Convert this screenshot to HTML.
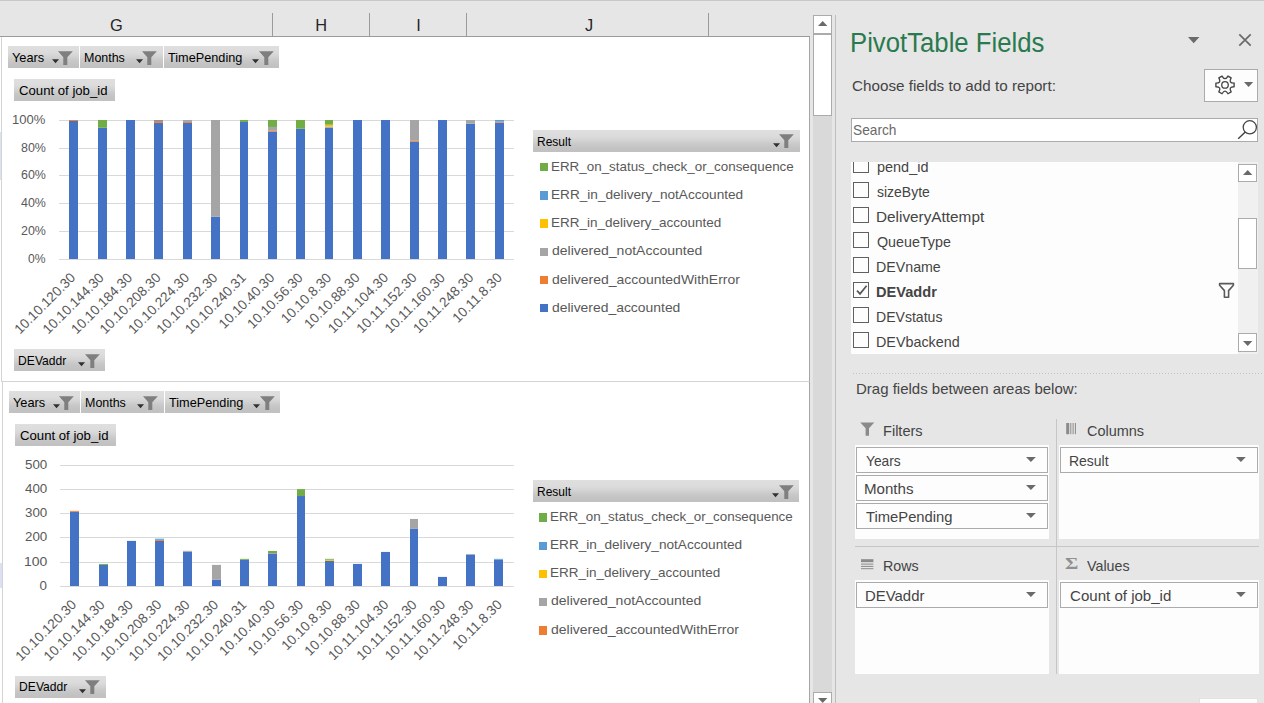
<!DOCTYPE html><html lang="en"><head><meta charset="utf-8"><title>PivotTable Fields</title><style>
html,body{margin:0;padding:0}
body{width:1264px;height:703px;overflow:hidden;position:relative;background:#e6e6e6;font-family:"Liberation Sans",sans-serif}
.a{position:absolute;box-sizing:content-box}
.t{position:absolute;white-space:pre;line-height:1;transform-origin:0 0;font-family:"Liberation Sans",sans-serif}
.pbtn{position:absolute;background:linear-gradient(#dfdfdf 0%,#dcdcdc 28%,#d4d4d4 46%,#c9c9c9 64%,#c3c3c3 82%,#c1c1c1 100%)}
.wbox{position:absolute;background:#fdfdfd;border:1px solid #ababab}
.sbtn{position:absolute;background:#fff;border:1px solid #ababab}
.item{position:absolute;background:#fdfdfd;border:1px solid #ababab}
.cb{position:absolute;width:14px;background:#fdfdfd;border:1px solid #606060}
svg{overflow:visible}
</style></head><body><div class="a" style="left:0;top:0;width:1264px;height:1px;background:#c8c8c8"></div><div class="a" style="left:0;top:37px;width:810px;height:666px;background:#fff"></div><div class="a" style="left:0;top:36px;width:810px;height:1px;background:#9b9b9b"></div><div class="a" style="left:272px;top:13px;width:1px;height:24px;background:#9b9b9b"></div><div class="a" style="left:369px;top:13px;width:1px;height:24px;background:#9b9b9b"></div><div class="a" style="left:466px;top:13px;width:1px;height:24px;background:#9b9b9b"></div><div class="a" style="left:708px;top:13px;width:1px;height:24px;background:#9b9b9b"></div><span class="t" style="left:110.00px;top:16.92px;font-size:16.4px;color:#262626;">G</span><span class="t" style="left:315.20px;top:16.92px;font-size:16.4px;color:#262626;">H</span><span class="t" style="left:416.30px;top:16.92px;font-size:16.4px;color:#262626;">I</span><span class="t" style="left:585.00px;top:16.92px;font-size:16.4px;color:#262626;">J</span><div class="a" style="left:1px;top:37px;width:807px;height:344px;border:1px solid #d4d4d4;border-top:none;border-right:1px solid #a6a6a6;background:#fff"></div><div class="a" style="left:2px;top:382px;width:806px;height:330px;border-left:1px solid #d4d4d4;border-right:1px solid #a6a6a6;background:#fff"></div><div class="a" style="left:0;top:132px;width:1px;height:48px;background:#d9e1f2"></div><div class="a" style="left:0;top:563px;width:2px;height:25px;background:#d9e1f2"></div><div class="pbtn" style="left:8.0px;top:46.2px;width:70.8px;height:21.6px"></div><span class="t" style="left:12.00px;top:51.56px;font-size:12.1px;color:#000;transform:scaleX(1.0580);">Years</span><svg class="a" style="left:51.8px;top:59.0px" width="8" height="5" viewBox="0 0 8 5"><path d="M0 0.2 H7 L3.5 4.2 Z" fill="#303030"/></svg><svg class="a" style="left:58.3px;top:50.5px" width="16" height="15" viewBox="0 0 16 15"><path d="M0 0.2 H14.8 L9.3 6.3 V14.0 H5.3 V6.3 Z" fill="#7f7f7f"/></svg><div class="pbtn" style="left:80.1px;top:46.2px;width:82.7px;height:21.6px"></div><span class="t" style="left:84.30px;top:51.56px;font-size:12.1px;color:#000;transform:scaleX(1.0300);">Months</span><svg class="a" style="left:135.8px;top:59.0px" width="8" height="5" viewBox="0 0 8 5"><path d="M0 0.2 H7 L3.5 4.2 Z" fill="#303030"/></svg><svg class="a" style="left:142.3px;top:50.5px" width="16" height="15" viewBox="0 0 16 15"><path d="M0 0.2 H14.8 L9.3 6.3 V14.0 H5.3 V6.3 Z" fill="#7f7f7f"/></svg><div class="pbtn" style="left:164.0px;top:46.2px;width:115.0px;height:21.6px"></div><span class="t" style="left:168.00px;top:51.56px;font-size:12.1px;color:#000;transform:scaleX(1.0502);">TimePending</span><svg class="a" style="left:252.0px;top:59.0px" width="8" height="5" viewBox="0 0 8 5"><path d="M0 0.2 H7 L3.5 4.2 Z" fill="#303030"/></svg><svg class="a" style="left:258.5px;top:50.5px" width="16" height="15" viewBox="0 0 16 15"><path d="M0 0.2 H14.8 L9.3 6.3 V14.0 H5.3 V6.3 Z" fill="#7f7f7f"/></svg><div class="pbtn" style="left:14.0px;top:79.1px;width:100.9px;height:21.6px"></div><span class="t" style="left:18.50px;top:85.26px;font-size:12.1px;color:#000;transform:scaleX(1.0877);">Count of job_id</span><div class="pbtn" style="left:14.0px;top:349.3px;width:91.0px;height:21.6px"></div><span class="t" style="left:18.10px;top:354.66px;font-size:12.1px;color:#000;">DEVaddr</span><svg class="a" style="left:78.0px;top:362.1px" width="8" height="5" viewBox="0 0 8 5"><path d="M0 0.2 H7 L3.5 4.2 Z" fill="#303030"/></svg><svg class="a" style="left:84.5px;top:353.6px" width="16" height="15" viewBox="0 0 16 15"><path d="M0 0.2 H14.8 L9.3 6.3 V14.0 H5.3 V6.3 Z" fill="#7f7f7f"/></svg><div class="pbtn" style="left:533.0px;top:130.0px;width:266.7px;height:21.6px"></div><span class="t" style="left:537.10px;top:135.86px;font-size:12.1px;color:#000;transform:scaleX(0.9909);">Result</span><svg class="a" style="left:772.7px;top:142.8px" width="8" height="5" viewBox="0 0 8 5"><path d="M0 0.2 H7 L3.5 4.2 Z" fill="#303030"/></svg><svg class="a" style="left:779.2px;top:134.3px" width="16" height="15" viewBox="0 0 16 15"><path d="M0 0.2 H14.8 L9.3 6.3 V14.0 H5.3 V6.3 Z" fill="#7f7f7f"/></svg><svg class="a" style="left:0;top:0" width="812" height="703" viewBox="0 0 812 703" font-family='"Liberation Sans", sans-serif'><rect x="59.0" y="259" width="455.0" height="1" fill="#d9d9d9"/><rect x="59.0" y="231" width="455.0" height="1" fill="#d9d9d9"/><rect x="59.0" y="203" width="455.0" height="1" fill="#d9d9d9"/><rect x="59.0" y="175" width="455.0" height="1" fill="#d9d9d9"/><rect x="59.0" y="148" width="455.0" height="1" fill="#d9d9d9"/><rect x="59.0" y="120" width="455.0" height="1" fill="#d9d9d9"/><rect x="69" y="120.97" width="9" height="138.03" fill="#4472c4"/><rect x="69" y="120.00" width="9" height="0.97" fill="#ed7d31"/><rect x="98" y="127.78" width="9" height="131.22" fill="#4472c4"/><rect x="98" y="120.00" width="9" height="7.78" fill="#70ad47"/><rect x="126" y="120.00" width="9" height="139.00" fill="#4472c4"/><rect x="154" y="122.92" width="9" height="136.08" fill="#4472c4"/><rect x="154" y="120.97" width="9" height="1.95" fill="#ed7d31"/><rect x="154" y="120.00" width="9" height="0.97" fill="#5b9bd5"/><rect x="183" y="122.92" width="9" height="136.08" fill="#4472c4"/><rect x="183" y="121.95" width="9" height="0.97" fill="#ed7d31"/><rect x="183" y="120.00" width="9" height="1.95" fill="#a5a5a5"/><rect x="211" y="216.61" width="9" height="42.39" fill="#4472c4"/><rect x="211" y="120.00" width="9" height="96.61" fill="#a5a5a5"/><rect x="240" y="121.95" width="8" height="137.05" fill="#4472c4"/><rect x="240" y="120.00" width="8" height="1.95" fill="#70ad47"/><rect x="268" y="131.81" width="9" height="127.19" fill="#4472c4"/><rect x="268" y="130.84" width="9" height="0.97" fill="#ed7d31"/><rect x="268" y="126.95" width="9" height="3.89" fill="#a5a5a5"/><rect x="268" y="120.00" width="9" height="6.95" fill="#70ad47"/><rect x="296" y="128.76" width="9" height="130.24" fill="#4472c4"/><rect x="296" y="120.00" width="9" height="8.76" fill="#70ad47"/><rect x="325" y="127.65" width="8" height="131.35" fill="#4472c4"/><rect x="325" y="126.67" width="8" height="0.97" fill="#a5a5a5"/><rect x="325" y="124.73" width="8" height="1.95" fill="#ffc000"/><rect x="325" y="120.00" width="8" height="4.73" fill="#70ad47"/><rect x="353" y="120.00" width="9" height="139.00" fill="#4472c4"/><rect x="381" y="120.00" width="9" height="139.00" fill="#4472c4"/><rect x="410" y="141.82" width="9" height="117.18" fill="#4472c4"/><rect x="410" y="140.85" width="9" height="0.97" fill="#ed7d31"/><rect x="410" y="120.00" width="9" height="20.85" fill="#a5a5a5"/><rect x="438" y="120.00" width="9" height="139.00" fill="#4472c4"/><rect x="466" y="123.75" width="9" height="135.25" fill="#4472c4"/><rect x="466" y="120.00" width="9" height="3.75" fill="#a5a5a5"/><rect x="495" y="122.64" width="9" height="136.36" fill="#4472c4"/><rect x="495" y="121.67" width="9" height="0.97" fill="#ed7d31"/><rect x="495" y="120.00" width="9" height="1.67" fill="#5b9bd5"/><text x="76.2" y="278.5" text-anchor="end" transform="rotate(-45 76.2 278.5)" font-size="13.65" fill="#595959">10.10.120.30</text><text x="104.7" y="278.5" text-anchor="end" transform="rotate(-45 104.7 278.5)" font-size="13.65" fill="#595959">10.10.144.30</text><text x="133.1" y="278.5" text-anchor="end" transform="rotate(-45 133.1 278.5)" font-size="13.65" fill="#595959">10.10.184.30</text><text x="161.5" y="278.5" text-anchor="end" transform="rotate(-45 161.5 278.5)" font-size="13.65" fill="#595959">10.10.208.30</text><text x="190.0" y="278.5" text-anchor="end" transform="rotate(-45 190.0 278.5)" font-size="13.65" fill="#595959">10.10.224.30</text><text x="218.4" y="278.5" text-anchor="end" transform="rotate(-45 218.4 278.5)" font-size="13.65" fill="#595959">10.10.232.30</text><text x="246.8" y="278.5" text-anchor="end" transform="rotate(-45 246.8 278.5)" font-size="13.65" fill="#595959">10.10.240.31</text><text x="275.3" y="278.5" text-anchor="end" transform="rotate(-45 275.3 278.5)" font-size="13.65" fill="#595959">10.10.40.30</text><text x="303.7" y="278.5" text-anchor="end" transform="rotate(-45 303.7 278.5)" font-size="13.65" fill="#595959">10.10.56.30</text><text x="332.2" y="278.5" text-anchor="end" transform="rotate(-45 332.2 278.5)" font-size="13.65" fill="#595959">10.10.8.30</text><text x="360.6" y="278.5" text-anchor="end" transform="rotate(-45 360.6 278.5)" font-size="13.65" fill="#595959">10.10.88.30</text><text x="389.0" y="278.5" text-anchor="end" transform="rotate(-45 389.0 278.5)" font-size="13.65" fill="#595959">10.11.104.30</text><text x="417.5" y="278.5" text-anchor="end" transform="rotate(-45 417.5 278.5)" font-size="13.65" fill="#595959">10.11.152.30</text><text x="445.9" y="278.5" text-anchor="end" transform="rotate(-45 445.9 278.5)" font-size="13.65" fill="#595959">10.11.160.30</text><text x="474.3" y="278.5" text-anchor="end" transform="rotate(-45 474.3 278.5)" font-size="13.65" fill="#595959">10.11.248.30</text><text x="502.8" y="278.5" text-anchor="end" transform="rotate(-45 502.8 278.5)" font-size="13.65" fill="#595959">10.11.8.30</text></svg><span class="t" style="left:27.90px;top:251.76px;font-size:13.4px;color:#595959;transform:scaleX(0.9050);">0%</span><span class="t" style="left:20.50px;top:223.76px;font-size:13.4px;color:#595959;transform:scaleX(0.9296);">20%</span><span class="t" style="left:20.50px;top:195.76px;font-size:13.4px;color:#595959;transform:scaleX(0.9296);">40%</span><span class="t" style="left:20.50px;top:167.76px;font-size:13.4px;color:#595959;transform:scaleX(0.9296);">60%</span><span class="t" style="left:20.50px;top:140.76px;font-size:13.4px;color:#595959;transform:scaleX(0.9296);">80%</span><span class="t" style="left:12.13px;top:112.76px;font-size:13.4px;color:#595959;transform:scaleX(0.9718);">100%</span><div class="a" style="left:540.3px;top:163.0px;width:8px;height:8.4px;background:#70ad47"></div><span class="t" style="left:550.58px;top:159.73px;font-size:13.2px;color:#595959;transform:scaleX(1.0157);">ERR_on_status_check_or_consequence</span><div class="a" style="left:540.3px;top:191.2px;width:8px;height:8.4px;background:#5b9bd5"></div><span class="t" style="left:550.57px;top:187.95px;font-size:13.2px;color:#595959;transform:scaleX(1.0321);">ERR_in_delivery_notAccounted</span><div class="a" style="left:540.3px;top:219.4px;width:8px;height:8.4px;background:#ffc000"></div><span class="t" style="left:550.58px;top:216.17px;font-size:13.2px;color:#595959;transform:scaleX(1.0238);">ERR_in_delivery_accounted</span><div class="a" style="left:540.3px;top:247.7px;width:8px;height:8.4px;background:#a5a5a5"></div><span class="t" style="left:551.60px;top:244.39px;font-size:13.2px;color:#595959;transform:scaleX(1.0619);">delivered_notAccounted</span><div class="a" style="left:540.3px;top:275.9px;width:8px;height:8.4px;background:#ed7d31"></div><span class="t" style="left:551.60px;top:272.61px;font-size:13.2px;color:#595959;transform:scaleX(1.0590);">delivered_accountedWithError</span><div class="a" style="left:540.3px;top:304.1px;width:8px;height:8.4px;background:#4472c4"></div><span class="t" style="left:551.60px;top:300.83px;font-size:13.2px;color:#595959;transform:scaleX(1.0546);">delivered_accounted</span><div class="pbtn" style="left:9.0px;top:391.2px;width:70.8px;height:21.6px"></div><span class="t" style="left:13.00px;top:396.56px;font-size:12.1px;color:#000;transform:scaleX(1.0580);">Years</span><svg class="a" style="left:52.8px;top:404.0px" width="8" height="5" viewBox="0 0 8 5"><path d="M0 0.2 H7 L3.5 4.2 Z" fill="#303030"/></svg><svg class="a" style="left:59.3px;top:395.5px" width="16" height="15" viewBox="0 0 16 15"><path d="M0 0.2 H14.8 L9.3 6.3 V14.0 H5.3 V6.3 Z" fill="#7f7f7f"/></svg><div class="pbtn" style="left:81.1px;top:391.2px;width:82.7px;height:21.6px"></div><span class="t" style="left:85.30px;top:396.56px;font-size:12.1px;color:#000;transform:scaleX(1.0300);">Months</span><svg class="a" style="left:136.8px;top:404.0px" width="8" height="5" viewBox="0 0 8 5"><path d="M0 0.2 H7 L3.5 4.2 Z" fill="#303030"/></svg><svg class="a" style="left:143.3px;top:395.5px" width="16" height="15" viewBox="0 0 16 15"><path d="M0 0.2 H14.8 L9.3 6.3 V14.0 H5.3 V6.3 Z" fill="#7f7f7f"/></svg><div class="pbtn" style="left:165.0px;top:391.2px;width:115.0px;height:21.6px"></div><span class="t" style="left:169.00px;top:396.56px;font-size:12.1px;color:#000;transform:scaleX(1.0502);">TimePending</span><svg class="a" style="left:253.0px;top:404.0px" width="8" height="5" viewBox="0 0 8 5"><path d="M0 0.2 H7 L3.5 4.2 Z" fill="#303030"/></svg><svg class="a" style="left:259.5px;top:395.5px" width="16" height="15" viewBox="0 0 16 15"><path d="M0 0.2 H14.8 L9.3 6.3 V14.0 H5.3 V6.3 Z" fill="#7f7f7f"/></svg><div class="pbtn" style="left:15.0px;top:424.1px;width:100.9px;height:21.6px"></div><span class="t" style="left:19.50px;top:430.26px;font-size:12.1px;color:#000;transform:scaleX(1.0877);">Count of job_id</span><div class="pbtn" style="left:15.0px;top:676.1px;width:90.9px;height:21.6px"></div><span class="t" style="left:19.10px;top:681.46px;font-size:12.1px;color:#000;">DEVaddr</span><svg class="a" style="left:78.9px;top:688.9px" width="8" height="5" viewBox="0 0 8 5"><path d="M0 0.2 H7 L3.5 4.2 Z" fill="#303030"/></svg><svg class="a" style="left:85.4px;top:680.4px" width="16" height="15" viewBox="0 0 16 15"><path d="M0 0.2 H14.8 L9.3 6.3 V14.0 H5.3 V6.3 Z" fill="#7f7f7f"/></svg><div class="pbtn" style="left:533.0px;top:480.3px;width:266.0px;height:21.6px"></div><span class="t" style="left:537.10px;top:486.16px;font-size:12.1px;color:#000;transform:scaleX(0.9909);">Result</span><svg class="a" style="left:772.0px;top:493.1px" width="8" height="5" viewBox="0 0 8 5"><path d="M0 0.2 H7 L3.5 4.2 Z" fill="#303030"/></svg><svg class="a" style="left:778.5px;top:484.6px" width="16" height="15" viewBox="0 0 16 15"><path d="M0 0.2 H14.8 L9.3 6.3 V14.0 H5.3 V6.3 Z" fill="#7f7f7f"/></svg><svg class="a" style="left:0;top:0" width="812" height="703" viewBox="0 0 812 703" font-family='"Liberation Sans", sans-serif'><rect x="60.0" y="586" width="454.0" height="1" fill="#d9d9d9"/><rect x="60.0" y="562" width="454.0" height="1" fill="#d9d9d9"/><rect x="60.0" y="537" width="454.0" height="1" fill="#d9d9d9"/><rect x="60.0" y="513" width="454.0" height="1" fill="#d9d9d9"/><rect x="60.0" y="489" width="454.0" height="1" fill="#d9d9d9"/><rect x="60.0" y="465" width="454.0" height="1" fill="#d9d9d9"/><rect x="70" y="511.80" width="9" height="74.20" fill="#4472c4"/><rect x="70" y="510.82" width="9" height="0.97" fill="#ed7d31"/><rect x="99" y="564.90" width="9" height="21.10" fill="#4472c4"/><rect x="99" y="563.93" width="9" height="0.97" fill="#70ad47"/><rect x="127" y="540.89" width="9" height="45.11" fill="#4472c4"/><rect x="155" y="540.89" width="9" height="45.11" fill="#4472c4"/><rect x="155" y="539.80" width="9" height="1.09" fill="#ed7d31"/><rect x="155" y="538.71" width="9" height="1.09" fill="#5b9bd5"/><rect x="183" y="551.81" width="9" height="34.19" fill="#4472c4"/><rect x="183" y="550.84" width="9" height="0.97" fill="#a5a5a5"/><rect x="212" y="579.82" width="9" height="6.18" fill="#4472c4"/><rect x="212" y="564.90" width="9" height="14.91" fill="#a5a5a5"/><rect x="240" y="559.81" width="9" height="26.19" fill="#4472c4"/><rect x="240" y="558.84" width="9" height="0.97" fill="#70ad47"/><rect x="268" y="553.99" width="9" height="32.01" fill="#4472c4"/><rect x="268" y="553.02" width="9" height="0.97" fill="#a5a5a5"/><rect x="268" y="550.96" width="9" height="2.06" fill="#70ad47"/><rect x="297" y="496.03" width="8" height="89.97" fill="#4472c4"/><rect x="297" y="489.12" width="8" height="6.91" fill="#70ad47"/><rect x="325" y="560.90" width="9" height="25.10" fill="#4472c4"/><rect x="325" y="559.69" width="9" height="1.21" fill="#ffc000"/><rect x="325" y="558.84" width="9" height="0.85" fill="#70ad47"/><rect x="353" y="563.93" width="9" height="22.07" fill="#4472c4"/><rect x="381" y="551.93" width="9" height="34.07" fill="#4472c4"/><rect x="410" y="528.89" width="8" height="57.11" fill="#4472c4"/><rect x="410" y="518.95" width="8" height="9.94" fill="#a5a5a5"/><rect x="438" y="576.91" width="9" height="9.09" fill="#4472c4"/><rect x="466" y="554.72" width="9" height="31.28" fill="#4472c4"/><rect x="466" y="553.99" width="9" height="0.73" fill="#a5a5a5"/><rect x="494" y="559.57" width="9" height="26.43" fill="#4472c4"/><rect x="494" y="558.84" width="9" height="0.73" fill="#5b9bd5"/><text x="77.2" y="605.5" text-anchor="end" transform="rotate(-45 77.2 605.5)" font-size="13.65" fill="#595959">10.10.120.30</text><text x="105.6" y="605.5" text-anchor="end" transform="rotate(-45 105.6 605.5)" font-size="13.65" fill="#595959">10.10.144.30</text><text x="133.9" y="605.5" text-anchor="end" transform="rotate(-45 133.9 605.5)" font-size="13.65" fill="#595959">10.10.184.30</text><text x="162.3" y="605.5" text-anchor="end" transform="rotate(-45 162.3 605.5)" font-size="13.65" fill="#595959">10.10.208.30</text><text x="190.7" y="605.5" text-anchor="end" transform="rotate(-45 190.7 605.5)" font-size="13.65" fill="#595959">10.10.224.30</text><text x="219.1" y="605.5" text-anchor="end" transform="rotate(-45 219.1 605.5)" font-size="13.65" fill="#595959">10.10.232.30</text><text x="247.4" y="605.5" text-anchor="end" transform="rotate(-45 247.4 605.5)" font-size="13.65" fill="#595959">10.10.240.31</text><text x="275.8" y="605.5" text-anchor="end" transform="rotate(-45 275.8 605.5)" font-size="13.65" fill="#595959">10.10.40.30</text><text x="304.2" y="605.5" text-anchor="end" transform="rotate(-45 304.2 605.5)" font-size="13.65" fill="#595959">10.10.56.30</text><text x="332.6" y="605.5" text-anchor="end" transform="rotate(-45 332.6 605.5)" font-size="13.65" fill="#595959">10.10.8.30</text><text x="360.9" y="605.5" text-anchor="end" transform="rotate(-45 360.9 605.5)" font-size="13.65" fill="#595959">10.10.88.30</text><text x="389.3" y="605.5" text-anchor="end" transform="rotate(-45 389.3 605.5)" font-size="13.65" fill="#595959">10.11.104.30</text><text x="417.7" y="605.5" text-anchor="end" transform="rotate(-45 417.7 605.5)" font-size="13.65" fill="#595959">10.11.152.30</text><text x="446.1" y="605.5" text-anchor="end" transform="rotate(-45 446.1 605.5)" font-size="13.65" fill="#595959">10.11.160.30</text><text x="474.4" y="605.5" text-anchor="end" transform="rotate(-45 474.4 605.5)" font-size="13.65" fill="#595959">10.11.248.30</text><text x="502.8" y="605.5" text-anchor="end" transform="rotate(-45 502.8 605.5)" font-size="13.65" fill="#595959">10.11.8.30</text></svg><span class="t" style="left:39.50px;top:578.76px;font-size:13.4px;color:#595959;">0</span><span class="t" style="left:23.66px;top:554.76px;font-size:13.4px;color:#595959;transform:scaleX(1.0433);">100</span><span class="t" style="left:24.70px;top:529.76px;font-size:13.4px;color:#595959;transform:scaleX(0.9957);">200</span><span class="t" style="left:24.70px;top:505.76px;font-size:13.4px;color:#595959;transform:scaleX(0.9957);">300</span><span class="t" style="left:24.70px;top:481.76px;font-size:13.4px;color:#595959;transform:scaleX(0.9957);">400</span><span class="t" style="left:24.70px;top:457.76px;font-size:13.4px;color:#595959;transform:scaleX(0.9957);">500</span><div class="a" style="left:539.2px;top:513.3px;width:8px;height:8.4px;background:#70ad47"></div><span class="t" style="left:550.08px;top:509.73px;font-size:13.2px;color:#595959;transform:scaleX(1.0157);">ERR_on_status_check_or_consequence</span><div class="a" style="left:539.2px;top:541.5px;width:8px;height:8.4px;background:#5b9bd5"></div><span class="t" style="left:550.07px;top:537.95px;font-size:13.2px;color:#595959;transform:scaleX(1.0321);">ERR_in_delivery_notAccounted</span><div class="a" style="left:539.2px;top:569.7px;width:8px;height:8.4px;background:#ffc000"></div><span class="t" style="left:550.08px;top:566.17px;font-size:13.2px;color:#595959;transform:scaleX(1.0238);">ERR_in_delivery_accounted</span><div class="a" style="left:539.2px;top:598.0px;width:8px;height:8.4px;background:#a5a5a5"></div><span class="t" style="left:551.10px;top:594.39px;font-size:13.2px;color:#595959;transform:scaleX(1.0619);">delivered_notAccounted</span><div class="a" style="left:539.2px;top:626.2px;width:8px;height:8.4px;background:#ed7d31"></div><span class="t" style="left:551.10px;top:622.61px;font-size:13.2px;color:#595959;transform:scaleX(1.0590);">delivered_accountedWithError</span><div class="a" style="left:813px;top:15px;width:19px;height:688px;background:#d9d9d9"></div><div class="sbtn" style="left:813px;top:15px;width:17px;height:17px"></div><svg class="a" style="left:817.8px;top:20.9px" width="9.4" height="5" viewBox="0 0 9.4 5"><path d="M0 5 H9.4 L4.7 0 Z" fill="#6a6a6a"/></svg><div class="sbtn" style="left:813px;top:34px;width:17px;height:80px"></div><div class="sbtn" style="left:813px;top:692.4px;width:17px;height:17px"></div><svg class="a" style="left:817.8px;top:698.2px" width="10" height="5" viewBox="0 0 10 5"><path d="M0 0 H9.4 L4.7 5 Z" fill="#6a6a6a"/></svg><div class="a" style="left:835px;top:15px;width:1px;height:688px;background:#bdbdbd"></div><span class="t" style="left:849.60px;top:29.54px;font-size:27px;color:#297a4e;transform:scaleX(0.9524);">PivotTable Fields</span><svg class="a" style="left:1188.0px;top:37.0px" width="11.4" height="6.2" viewBox="0 0 11.4 6.2"><path d="M0 0 H11.4 L5.7 6.2 Z" fill="#6a6a6a"/></svg><svg class="a" style="left:1238px;top:32.6px" width="14" height="14" viewBox="0 0 14 14"><path d="M1.3 1.3 L12.7 12.7 M12.7 1.3 L1.3 12.7" stroke="#6a6a6a" stroke-width="1.7" fill="none"/></svg><span class="t" style="left:852.30px;top:78.40px;font-size:15px;color:#444444;transform:scaleX(1.0146);">Choose fields to add to report:</span><div class="wbox" style="left:1204px;top:69px;width:52px;height:31px"></div><svg class="a" style="left:0;top:0" width="1264" height="120" viewBox="0 0 1264 120"><path d="M1234.11 83.05 L1234.11 86.75 Q1228.12 86.70 1231.16 91.87 L1227.95 93.72 Q1225.00 88.50 1222.05 93.72 L1218.84 91.87 Q1221.88 86.70 1215.89 86.75 L1215.89 83.05 Q1221.88 83.10 1218.84 77.93 L1222.05 76.08 Q1225.00 81.30 1227.95 76.08 L1231.16 77.93 Q1228.12 83.10 1234.11 83.05 Z" fill="none" stroke="#444" stroke-width="1.35" stroke-linejoin="round"/><circle cx="1225.0" cy="84.9" r="3.25" fill="none" stroke="#444" stroke-width="1.3"/></svg><svg class="a" style="left:1244.0px;top:82.1px" width="9.2" height="4.9" viewBox="0 0 9.2 4.9"><path d="M0 0 H9.2 L4.6 4.9 Z" fill="#6a6a6a"/></svg><div class="wbox" style="left:851px;top:118px;width:405px;height:22px;background:#fff"></div><span class="t" style="left:853.10px;top:122.20px;font-size:15px;color:#6a6a6a;transform:scaleX(0.9134);">Search</span><svg class="a" style="left:1236px;top:118px" width="24" height="24" viewBox="0 0 24 24"><circle cx="13.8" cy="9.3" r="6.6" fill="none" stroke="#444" stroke-width="1.3"/><path d="M9.3 14 L2.2 20.8" stroke="#444" stroke-width="1.5" fill="none"/></svg><div class="a" style="left:851px;top:162px;width:387px;height:192.3px;background:#fdfdfd;overflow:hidden"></div><div class="a" style="left:1238px;top:162px;width:20px;height:192.3px;background:#f0f0f0"></div><div class="cb" style="left:853px;top:162px;height:10px;border-top:none;"></div><span class="t" style="left:877.00px;top:159.00px;font-size:15px;color:#444444;transform:scaleX(0.9634);clip-path:inset(3.0px -3px -6px -3px);">pend_id</span><div class="cb" style="left:853px;top:182px;height:14px;"></div><span class="t" style="left:877.00px;top:184.00px;font-size:15px;color:#444444;transform:scaleX(0.9317);">sizeByte</span><div class="cb" style="left:853px;top:207px;height:14px;"></div><span class="t" style="left:875.98px;top:209.00px;font-size:15px;color:#444444;transform:scaleX(1.0218);">DeliveryAttempt</span><div class="cb" style="left:853px;top:232px;height:14px;"></div><span class="t" style="left:877.00px;top:234.00px;font-size:15px;color:#444444;transform:scaleX(0.9532);">QueueType</span><div class="cb" style="left:853px;top:257px;height:14px;"></div><span class="t" style="left:876.05px;top:259.00px;font-size:15px;color:#444444;transform:scaleX(0.9475);">DEVname</span><div class="cb" style="left:853px;top:282px;height:14px;"></div><span class="t" style="left:876.03px;top:284.00px;font-size:15px;color:#444444;transform:scaleX(0.9727);font-weight:bold;">DEVaddr</span><svg class="a" style="left:855px;top:284px" width="13" height="12" viewBox="0 0 13 12"><path d="M2.0 6.7 L5.0 9.9 L11.6 1.8" stroke="#585858" stroke-width="1.7" fill="none"/></svg><div class="cb" style="left:853px;top:307px;height:14px;"></div><span class="t" style="left:876.06px;top:309.00px;font-size:15px;color:#444444;transform:scaleX(0.9371);">DEVstatus</span><div class="cb" style="left:853px;top:332px;height:14px;"></div><span class="t" style="left:876.04px;top:334.00px;font-size:15px;color:#444444;transform:scaleX(0.9558);">DEVbackend</span><svg class="a" style="left:1217.6px;top:282.4px" width="18" height="17" viewBox="0 0 18 17"><path d="M1.6 1.6 H15.4 V3.2 L10.6 8.6 V15.2 H6.4 V8.6 L1.6 3.2 Z" stroke="#5a5a5a" stroke-width="1.6" fill="#fdfdfd" stroke-linejoin="round"/></svg><div class="sbtn" style="left:1238.4px;top:164px;width:16.6px;height:16.4px"></div><svg class="a" style="left:1243.0px;top:170.4px" width="9.4" height="5" viewBox="0 0 9.4 5"><path d="M0 5 H9.4 L4.7 0 Z" fill="#6a6a6a"/></svg><div class="sbtn" style="left:1238.4px;top:218.3px;width:16.6px;height:48.6px"></div><div class="sbtn" style="left:1238.4px;top:333.3px;width:16.6px;height:16.4px"></div><svg class="a" style="left:1243.0px;top:340.9px" width="9.4" height="5" viewBox="0 0 9.4 5"><path d="M0 0 H9.4 L4.7 5 Z" fill="#6a6a6a"/></svg><div class="a" style="left:853px;top:373px;width:411px;height:1px;background:repeating-linear-gradient(90deg,#c2c2c2 0 1px,transparent 1px 3px)"></div><span class="t" style="left:856.00px;top:381.30px;font-size:15px;color:#444444;">Drag fields between areas below:</span><div class="a" style="left:1056px;top:419px;width:1px;height:255px;background:#c6c6c6"></div><div class="a" style="left:855px;top:546px;width:404px;height:1px;background:#c6c6c6"></div><div class="a" style="left:855px;top:445px;width:194px;height:93.7px;background:#fdfdfd"></div><div class="a" style="left:1059px;top:445px;width:200px;height:93.7px;background:#fdfdfd"></div><div class="a" style="left:855px;top:580.4px;width:194px;height:93.2px;background:#fdfdfd"></div><div class="a" style="left:1059px;top:580.4px;width:200px;height:93.2px;background:#fdfdfd"></div><svg class="a" style="left:860px;top:422px" width="15" height="15" viewBox="0 0 15 15"><path d="M0.3 0.4 H14.3 L9 6.2 V13.8 H5.6 V6.2 Z" fill="#8a8a8a"/></svg><span class="t" style="left:883.03px;top:423.30px;font-size:15px;color:#444444;transform:scaleX(0.9712);">Filters</span><svg class="a" style="left:1066px;top:423.4px" width="11" height="12" viewBox="0 0 11 12"><rect x="0.2" y="0" width="3" height="11.2" fill="#8a8a8a"/><rect x="4.3" y="0" width="1" height="11.2" fill="#8a8a8a"/><rect x="6.6" y="0" width="1" height="11.2" fill="#8a8a8a"/><rect x="8.9" y="0" width="1" height="11.2" fill="#8a8a8a"/></svg><span class="t" style="left:1087.40px;top:423.30px;font-size:15px;color:#444444;transform:scaleX(0.9644);">Columns</span><svg class="a" style="left:860.6px;top:558.8px" width="13" height="11" viewBox="0 0 13 11"><rect x="0" y="0.2" width="12.4" height="3" fill="#8a8a8a"/><rect x="0" y="4.6" width="12.4" height="1" fill="#8a8a8a"/><rect x="0" y="6.9" width="12.4" height="1" fill="#8a8a8a"/><rect x="0" y="9.2" width="12.4" height="1" fill="#8a8a8a"/></svg><span class="t" style="left:883.05px;top:558.10px;font-size:15px;color:#444444;transform:scaleX(0.9498);">Rows</span><span class="t" style="left:1065.20px;top:554.71px;font-size:17px;color:#909090;font-weight:bold;font-family:'Liberation Serif',serif;transform:scaleX(1.2);">Σ</span><span class="t" style="left:1087.40px;top:558.10px;font-size:15px;color:#444444;transform:scaleX(0.9514);">Values</span><div class="item" style="left:856px;top:447px;width:190px;height:24px"></div><span class="t" style="left:865.50px;top:453.10px;font-size:15px;color:#444444;transform:scaleX(0.9194);">Years</span><svg class="a" style="left:1026.4px;top:457.2px" width="9.8" height="5" viewBox="0 0 9.8 5"><path d="M0 0 H9.8 L4.9 5 Z" fill="#6a6a6a"/></svg><div class="item" style="left:856px;top:475px;width:190px;height:24px"></div><span class="t" style="left:864.49px;top:481.10px;font-size:15px;color:#444444;transform:scaleX(1.0065);">Months</span><svg class="a" style="left:1026.4px;top:485.2px" width="9.8" height="5" viewBox="0 0 9.8 5"><path d="M0 0 H9.8 L4.9 5 Z" fill="#6a6a6a"/></svg><div class="item" style="left:856px;top:503px;width:190px;height:24px"></div><span class="t" style="left:865.50px;top:509.10px;font-size:15px;color:#444444;transform:scaleX(0.9853);">TimePending</span><svg class="a" style="left:1026.4px;top:513.2px" width="9.8" height="5" viewBox="0 0 9.8 5"><path d="M0 0 H9.8 L4.9 5 Z" fill="#6a6a6a"/></svg><div class="item" style="left:1060px;top:447px;width:196px;height:24px"></div><span class="t" style="left:1068.57px;top:453.10px;font-size:15px;color:#444444;transform:scaleX(0.9304);">Result</span><svg class="a" style="left:1236.4px;top:457.2px" width="9.8" height="5" viewBox="0 0 9.8 5"><path d="M0 0 H9.8 L4.9 5 Z" fill="#6a6a6a"/></svg><div class="item" style="left:856px;top:582px;width:190px;height:24px"></div><span class="t" style="left:864.51px;top:588.10px;font-size:15px;color:#444444;transform:scaleX(0.9939);">DEVaddr</span><svg class="a" style="left:1026.4px;top:592.2px" width="9.8" height="5" viewBox="0 0 9.8 5"><path d="M0 0 H9.8 L4.9 5 Z" fill="#6a6a6a"/></svg><div class="item" style="left:1060px;top:582px;width:196px;height:24px"></div><span class="t" style="left:1069.50px;top:588.10px;font-size:15px;color:#444444;transform:scaleX(1.0043);">Count of job_id</span><svg class="a" style="left:1236.4px;top:592.2px" width="9.8" height="5" viewBox="0 0 9.8 5"><path d="M0 0 H9.8 L4.9 5 Z" fill="#6a6a6a"/></svg><div class="a" style="left:1199px;top:698px;width:57px;height:10px;background:#fdfdfd;border:1px solid #e2e2e2"></div></body></html>
